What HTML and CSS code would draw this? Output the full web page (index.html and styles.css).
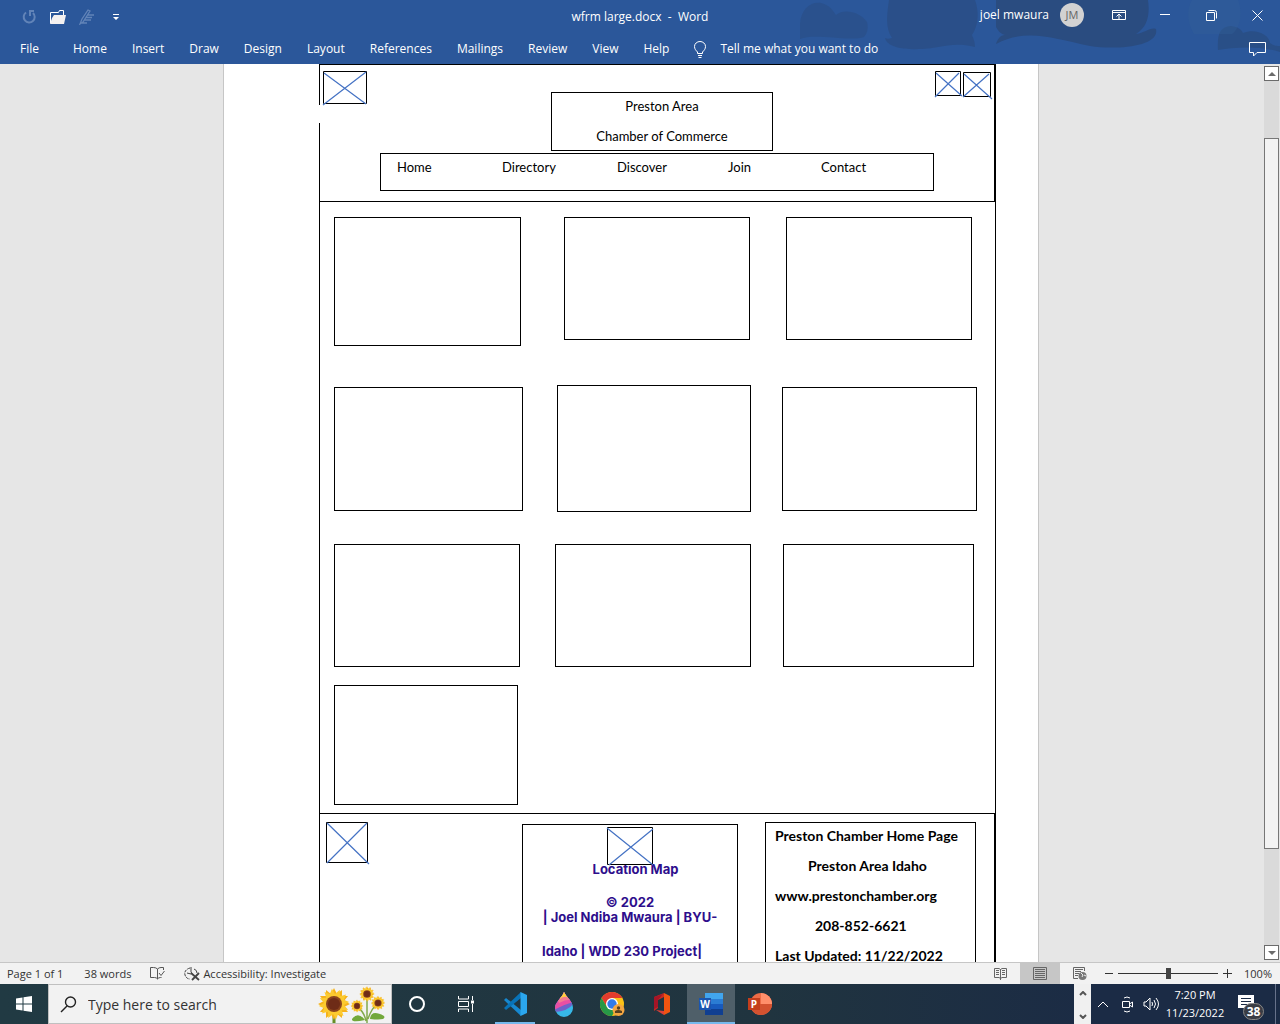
FILE: index.html
```html
<!DOCTYPE html>
<html lang="en">
<head>
<meta charset="utf-8">
<meta name="viewport" content="width=device-width, initial-scale=1">
<title>wfrm large.docx - Word</title>
<link rel="stylesheet" href="styles.css">
</head>
<body>
<header class="app-header">
  <svg class="clouds" width="520" height="64" viewBox="0 0 520 64" aria-hidden="true">
    <g fill="#2a4c80">
      <path opacity=".5" d="M40 39V24C41 8 52 1 61 3c9 2 12 8 15 12 8-7 24-3 31 7 2 8-1 13-3 15-14 5-49-4-64 2z"/>
      <path opacity=".65" d="M129 0c-2 14-4 28 3 38-3 1-5 1-7 0 3 14 39 12 53 9 11-2 22-4 37 0 0-6-2-9-3-12 7-10 7-24 3-35z"/>
      <path d="M236 0v27c3 5 5 7 9 8-5 0-8 5-9 9 30-16 56-6 94 2 25 4 70 1 66-17-6-2-11 4-20 5 12-7 14-20 12-34z"/>
      <path opacity=".75" d="M458 50c-1-16 2-23 13-24 7 1 10 3 12 7 12-5 26 1 27 10 4 3 7 3 10 3v6c-20-6-44-5-62-2z"/>
    </g>
    <path fill="#356099" opacity=".35" d="M432 0c-7 12-3 26 2 34h38c10-8 10-24 6-34z"/>
  </svg>
  <div class="title-bar">
    <div class="quick-access">
      <button class="icon-button faded" aria-label="Repeat"><svg width="16" height="16" viewBox="0 0 16 16" fill="none" stroke="currentColor" stroke-width="2"><path d="M5 3.500A5.500 5.500 0 1 0 12 4M13 2H9V7"/></svg></button>
      <button class="icon-button" aria-label="Open"><svg width="18" height="16" viewBox="0 0 18 16"><path d="M1.500 14V3.500h8l1-2h4v5" fill="none" stroke="#fff"/><path d="M5 6h12l-2 9H1l2-6z" fill="#f3f0f0"/></svg></button>
      <button class="icon-button faded" aria-label="Ink editor"><svg width="16" height="16" viewBox="0 0 16 16" fill="none" stroke="currentColor" stroke-width="1.300"><path d="M1 15l3-2 7-11-2-1-6 9zM8 6h7M7 8.500h6M5 11h7M3 14h5"/></svg></button>
      <button class="icon-button" aria-label="Customize Quick Access Toolbar"><svg width="8" height="8" viewBox="0 0 8 8" fill="#fff"><path d="M1 1h6v1H1zM1 4h6L4 7z"/></svg></button>
    </div>
    <h1 class="document-title">wfrm large.docx &nbsp;-&nbsp; Word</h1>
    <div class="account">
      <span class="user-name">joel mwaura</span>
      <span class="avatar">JM</span>
      <div class="window-buttons">
        <button aria-label="Ribbon display options"><svg width="14" height="12" viewBox="0 0 14 12" fill="none" stroke="#fff"><path d="M.5 1.500h13v9H.5zM.5 3.500h13M7 10V5M4.500 7.500L7 5l2.500 2.500"/></svg></button>
        <button aria-label="Minimize"><svg width="10" height="10" viewBox="0 0 10 10" stroke="#fff"><path d="M0 4.500h10"/></svg></button>
        <button aria-label="Restore"><svg width="11" height="11" viewBox="0 0 11 11" fill="none" stroke="#fff"><path d="M.5 2.500h8v8h-8zM2.500.5h6q2 0 2 2v6"/></svg></button>
        <button aria-label="Close"><svg width="11" height="11" viewBox="0 0 11 11" stroke="#fff"><path d="M.5.5l10 10M10.500.5l-10 10"/></svg></button>
      </div>
    </div>
  </div>
  <nav class="ribbon" aria-label="Ribbon tabs">
    <button class="tab file-tab">File</button>
    <button class="tab">Home</button>
    <button class="tab">Insert</button>
    <button class="tab">Draw</button>
    <button class="tab">Design</button>
    <button class="tab">Layout</button>
    <button class="tab">References</button>
    <button class="tab">Mailings</button>
    <button class="tab">Review</button>
    <button class="tab">View</button>
    <button class="tab">Help</button>
    <button class="tab tell-me"><svg width="12" height="17" viewBox="0 0 12 17" fill="none" stroke="#fff"><path d="M3.500 12.500V11C2 9.500.5 8 .5 5.500a5.500 5 0 0 1 11 0C11.500 8 10 9.500 8.500 11v1.500zM4 14.500h4M4.500 16.500h3"/></svg>Tell me what you want to do</button>
    <button class="tab comments" aria-label="Comments"><svg width="17" height="16" viewBox="0 0 17 16" fill="none" stroke="#fff"><path d="M.5 1.500h16v10H8L4.500 15v-3.500h-4z"/></svg></button>
  </nav>
</header>

<div class="workspace">
  <main class="page">
    <div class="wireframe">
      <header class="wire-header">
        <div class="wire-top">
          <svg class="picture logo" viewBox="0 0 44 33" role="img" aria-label="Picture placeholder"><path class="frame" d="M.5.5h43v32H.5z"/><path class="cross" d="M1 2l42 31M43 1L0 34"/></svg>
          <div class="wire-title"><p>Preston Area</p><p>Chamber of Commerce</p></div>
          <div class="social">
            <svg class="picture small" viewBox="0 0 26 26" role="img" aria-label="Picture placeholder"><path class="frame" d="M.5.5h25v24H.5z"/><path class="cross" d="M1 2l26 23M24 2L0 26"/></svg>
            <svg class="picture medium" viewBox="0 0 28 26" role="img" aria-label="Picture placeholder"><path class="frame" d="M.5 1.500h27v24H.5z"/><path class="cross" d="M1 3l28 25M26 3L0 26"/></svg>
          </div>
        </div>
        <nav class="wire-nav" aria-label="Site">
          <a href="#">Home</a><a href="#">Directory</a><a href="#">Discover</a><a href="#">Join</a><a href="#">Contact</a>
        </nav>
      </header>
      <section class="wire-main">
        <div class="card-row first"><div class="card"></div><div class="card"></div><div class="card"></div></div>
        <div class="card-row second"><div class="card"></div><div class="card"></div><div class="card"></div></div>
        <div class="card-row third"><div class="card"></div><div class="card"></div><div class="card"></div></div>
        <div class="card-row fourth"><div class="card"></div></div>
      </section>
      <footer class="wire-footer">
        <svg class="picture badge" viewBox="0 0 42 41" role="img" aria-label="Picture placeholder"><path class="frame" d="M.5.5h41v40H.5z"/><path class="cross" d="M1 1l42 41M41 1L1 41"/></svg>
        <div class="wire-box location">
          <svg class="picture map" viewBox="0 0 46 38" role="img" aria-label="Picture placeholder"><path class="frame" d="M.5.5h45v37H.5z"/><path class="cross" d="M0 1l46 37M46 2L2 38"/></svg>
          <p class="map-title">Location Map</p>
          <p class="copyright">© 2022<br>| Joel Ndiba Mwaura | BYU-</p>
          <p class="project">Idaho | WDD 230 Project|</p>
        </div>
        <div class="wire-box info">
          <p>Preston Chamber Home Page</p>
          <p class="area">Preston Area Idaho</p>
          <p>www.prestonchamber.org</p>
          <p class="phone">208-852-6621</p>
          <p>Last Updated: 11/22/2022</p>
        </div>
      </footer>
    </div>
  </main>
  <div class="scrollbar">
    <button class="scroll-arrow" aria-label="Scroll up"><svg width="8" height="4" viewBox="0 0 8 4"><path d="M0 4l4-4 4 4z" fill="#6b6b6b"/></svg></button>
    <div class="scroll-track"><div class="scroll-thumb"></div></div>
    <button class="scroll-arrow" aria-label="Scroll down"><svg width="8" height="4" viewBox="0 0 8 4"><path d="M0 0l4 4 4-4z" fill="#6b6b6b"/></svg></button>
  </div>
</div>

<div class="status-bar">
  <button class="page-count">Page 1 of 1</button>
  <button class="word-count">38 words</button>
  <button class="proofing" aria-label="Proofing"><svg width="15" height="13" viewBox="0 0 15 13" fill="none" stroke="#555"><path d="M7.500 12V2Q6 .5 3.500.5h-3v10h4q2 0 3 1.500 1-1.500 3-1.500h1M7.500 2Q9 .5 11 .5h2.500V3"/><path d="M9 6l2 2.500L14.500 4"/></svg></button>
  <button class="accessibility"><svg width="17" height="16" viewBox="0 0 17 16" fill="none" stroke="#444"><path d="M6 2C2 3 0 6 1 9s3 4 5 4" stroke-dasharray="3 1"/><path d="M7 1v5l2 3M3 7l4 1M10 3q3 1 3 4" /><path d="M7 7l8 7M15 7l-7 7" stroke-width="1.800"/></svg>Accessibility: Investigate</button>
  <div class="view-tools">
    <button class="view" aria-label="Read mode"><svg width="13" height="13" viewBox="0 0 13 13" fill="none" stroke="#666"><path d="M.5 1.500h4.500l1.500 1L8 1.500h4.500v9H8l-1.500 1-1.500-1H.5zM6.500 2v11M2 3.500h3M2 5.500h3M2 7.500h3M8 3.500h3M8 5.500h3M8 7.500h3"/></svg></button>
    <button class="view current" aria-label="Print layout"><svg width="14" height="13" viewBox="0 0 14 13" fill="none" stroke="#666"><path d="M.5.5h13v12H.5zM2 2.500h10M2 4.500h10M2 6.500h10M2 8.500h10M2 10.500h10"/></svg></button>
    <button class="view" aria-label="Web layout"><svg width="14" height="14" viewBox="0 0 14 14" fill="none" stroke="#666"><path d="M5 11.500H.5V.5h11V4M2 2.500h8M2 4.500h6M2 6.500h4M2 8.500h3"/><circle cx="9.500" cy="9" r="4" fill="#777" stroke="none"/><path d="M8 6l2 2-1 2M11 8l2 1" stroke="#eee"/></svg></button>
    <button class="zoom-step" aria-label="Zoom out"><svg width="8" height="9" viewBox="0 0 8 9" stroke="#333"><path d="M0 4.500h8"/></svg></button>
    <input class="zoom" type="range" min="10" max="190" value="100" aria-label="Zoom">
    <button class="zoom-step" aria-label="Zoom in"><svg width="9" height="9" viewBox="0 0 9 9" stroke="#333"><path d="M0 4.500h9M4.500 0v9"/></svg></button>
    <button class="zoom-level">100%</button>
  </div>
</div>

<footer class="taskbar">
  <button class="start" aria-label="Start"><svg width="16" height="16" viewBox="0 0 16 16" fill="#fff"><path d="M0 2.500L6.500 1.500v6H0zM7.500 1.300L16 0v7.500H7.500zM0 8.500h6.500v6L0 13.500zM7.500 8.500H16V16L7.500 14.700z"/></svg></button>
  <label class="search">
    <svg width="17" height="17" viewBox="0 0 17 17" fill="none" stroke="#222" stroke-width="1.400"><circle cx="10.500" cy="6" r="5"/><path d="M7 10L1 16"/></svg>
    <input type="text" placeholder="Type here to search" aria-label="Type here to search">
    <svg width="72" height="38" viewBox="0 0 72 38" aria-hidden="true">
      <defs>
        <g id="flower">
          <circle r="11" fill="#f0a81c"/>
          <path id="petals" fill="#f6b21b" d="M0-16L3-10 8-14 8-8 14-8 10-3 16 0 10 3 14 8 8 8 8 14 3 10 0 16-3 10-8 14-8 8-14 8-10 3-16 0-10-3-14-8-8-8-8-14-3-10z"/>
          <path fill="#fcca2f" transform="rotate(22) scale(.95)" d="M0-16L3-10 8-14 8-8 14-8 10-3 16 0 10 3 14 8 8 8 8 14 3 10 0 16-3 10-8 14-8 8-14 8-10 3-16 0-10-3-14-8-8-8-8-14-3-10z"/>
          <circle r="8" fill="#8a431c"/><circle r="6" fill="#6e2c17"/>
        </g>
      </defs>
      <path d="M17 28v10" stroke="#678f25" stroke-width="3"/>
      <g stroke="#83a94d" fill="none" stroke-width="1.500"><path d="M50 10v28M39 21q8 5 10 15M61 18q-7 6-10 16"/></g>
      <path d="M48 35q-7-9-13-1-1 4 13 1zM53 34q1-10 14-3 3 5-14 3z" fill="#72a83a"/>
      <use href="#flower" transform="translate(17 19)"/>
      <use href="#flower" transform="translate(50 9) scale(.48)"/>
      <use href="#flower" transform="translate(40 21) scale(.4)"/>
      <use href="#flower" transform="translate(61 18) scale(.45)"/>
    </svg>
  </label>
  <div class="apps">
    <button class="app" aria-label="Cortana"><svg width="18" height="18" viewBox="0 0 18 18" fill="none" stroke="#fff" stroke-width="2"><circle cx="9" cy="9" r="7"/></svg></button>
    <button class="app" aria-label="Task View"><svg width="18" height="18" viewBox="0 0 18 18" fill="none" stroke="#fff"><path d="M1.500 1v3h10V1M1.500 17v-3h10v3M1.500 6.500h10v5h-10zM15.500 1v4M15.500 9v8"/><path d="M14 5.500h3v3h-3z" fill="#fff" stroke="none"/></svg></button>
    <button class="app running" aria-label="Visual Studio Code"><svg width="24" height="24" viewBox="0 0 24 24"><path d="M1 8l2-2 15 12v6z" fill="#1688d0"/><path d="M1 16l2 2L18 6V0z" fill="#0873b8"/><path d="M17.500 0L24 3v18l-6.500 3z" fill="#2ba7ef"/></svg></button>
    <button class="app" aria-label="Paint app"><svg width="20" height="25" viewBox="0 0 20 25"><defs><clipPath id="drop"><path d="M10 0c2 5 9 9 9 16a9 9 0 0 1-18 0C1 10 8 6 10 0z"/></clipPath></defs><g clip-path="url(#drop)"><path d="M0 0h20v25H0z" fill="#37b8e8"/><path d="M0 0h20v11Q14 20 0 20z" fill="#7161c9"/><path d="M0 0h20v10Q11 12 0 18z" fill="#e94fa3"/><path d="M0 0h20v8Q12 7 5 11z" fill="#f27b91"/><path d="M5 0h10v6Q10 3 6 7z" fill="#ffd23b"/></g></svg></button>
    <button class="app" aria-label="Google Chrome"><svg width="26" height="24" viewBox="0 0 26 24"><circle cx="12" cy="12" r="12" fill="#fbc116"/><path d="M1.600 6A12 12 0 0 1 22.400 6H12l-5 9z" fill="#e33b2e"/><path d="M1.600 6A12 12 0 0 0 12 24l5-9-5 3-5-3z" fill="#279847"/><circle cx="12" cy="12" r="6" fill="#fff"/><circle cx="12" cy="12" r="4.700" fill="#317bea"/><circle cx="18.500" cy="18" r="6" fill="#f4a641"/><circle cx="18.500" cy="16" r="1.700" fill="#58401f"/><path d="M15 21v-2q3-2 7 0v2z" fill="#58401f"/></svg></button>
    <button class="app" aria-label="Office"><svg width="20" height="24" viewBox="0 0 20 24"><path d="M12 1L2 5v14l4-3V8l6-3z" fill="#c82a20"/><path d="M2 5v12l4-2V8l5-6z" fill="#a51527"/><path d="M12 1l6 3v16l-6 3z" fill="#f05410"/><path d="M4 18l8 1v4z" fill="#df3f37"/></svg></button>
    <button class="app active" aria-label="Word"><svg width="24" height="22" viewBox="0 0 24 22"><path d="M6 0h18v6H6z" fill="#41a5ee"/><path d="M6 6h18v5H6z" fill="#2b7cd3"/><path d="M6 11h18v5H6z" fill="#185abd"/><path d="M6 16h18v6H6z" fill="#103f91"/><path d="M0 5h12v12H0z" fill="#1a55af"/><text x="6" y="15" class="app-letter">W</text></svg></button>
    <button class="app" aria-label="PowerPoint"><svg width="24" height="22" viewBox="0 0 24 22"><circle cx="13" cy="11" r="11" fill="#ed6c47"/><path d="M13 0a11 11 0 0 1 11 11H13z" fill="#ff8f6b"/><path d="M24 11a11 11 0 0 1-22 0z" fill="#d35230"/><path d="M0 5h12v12H0z" fill="#c43e1c"/><text x="6" y="15" class="app-letter">P</text></svg></button>
  </div>
  <div class="tray">
    <div class="tray-scroll"><svg width="8" height="5" viewBox="0 0 8 5"><path d="M1 4l3-3 3 3"/></svg><svg width="8" height="5" viewBox="0 0 8 5"><path d="M1 1l3 3 3-3"/></svg></div>
    <button class="tray-icon" aria-label="Show hidden icons"><svg width="12" height="8" viewBox="0 0 12 8"><path d="M1 7l5-5 5 5"/></svg></button>
    <button class="tray-icon" aria-label="Meet Now"><svg width="13" height="17" viewBox="0 0 13 17"><path d="M1.500 5.500h7v6h-7zM8.500 8l3-2v5l-3-2M3 2q3-2 6 0M3 15q3 2 6 0"/></svg></button>
    <button class="tray-icon" aria-label="Volume"><svg width="17" height="16" viewBox="0 0 17 16"><path d="M1 6h2l4-4v12l-4-4H1zM9 6q1 2 0 4M11 4q3 4 0 8M13 2q5 6 0 12"/></svg></button>
    <button class="clock"><span>7:20 PM</span><span>11/23/2022</span></button>
    <button class="notifications" aria-label="38 notifications"><svg width="16" height="16" viewBox="0 0 16 16"><path d="M0 0h16v13h-7l-3 3v-3H0z" fill="#fff" stroke="none"/><path d="M3 3.500h10M3 6.500h10M3 9.500h6" stroke="#1b2b45"/></svg><span class="count">38</span></button>
    <span class="show-desktop"></span>
  </div>
</footer>
</body>
</html>
```

FILE: styles.css
```css
* { box-sizing: border-box; }
body {
  margin: 0;
  height: 100vh;
  display: flex;
  flex-direction: column;
  overflow: hidden;
  background: #e6e6e6;
  font-family: "Open Sans", "Noto Sans", sans-serif;
  font-size: 12px;
  color: #000;
}
p, h1 { margin: 0; font-size: inherit; font-weight: inherit; }
button {
  border: 0;
  padding: 0;
  background: none;
  color: inherit;
  font: inherit;
  white-space: nowrap;
}
svg { display: block; flex: none; }

/* Title bar and ribbon */
.app-header {
  position: relative;
  flex: none;
  background: #2b579a;
  color: #fff;
}
.clouds { position: absolute; top: 0; right: 0; }
.title-bar {
  position: relative;
  height: 32px;
  display: grid;
  grid-template-columns: 1fr auto 1fr;
}
.quick-access { display: flex; align-items: center; padding-left: 20px; gap: 11px; }
.icon-button { width: 18px; display: flex; justify-content: center; }
.faded { color: #6284b8; }
.document-title { line-height: 34px; }
.account { display: flex; justify-content: flex-end; line-height: 30px; height: 30px; }
.avatar {
  width: 24px;
  height: 24px;
  margin: 3px 12px 0 11px;
  border-radius: 50%;
  background: #d2d2d2;
  color: #666;
  font-size: 11px;
  line-height: 24px;
  text-align: center;
}
.window-buttons { display: flex; }
.window-buttons button { width: 46px; display: flex; align-items: center; justify-content: center; }
.ribbon {
  position: relative;
  display: flex;
  align-items: center;
  height: 32px;
  padding: 2px 14px 0 20px;
  gap: 25px;
}
.tab { line-height: 20px; }
.file-tab { margin-right: 9px; }
.tell-me { display: flex; align-items: center; gap: 14px; }
.comments { margin-left: auto; }

/* Document area */
.workspace { flex: 1; min-height: 0; display: flex; overflow: hidden; }
.page {
  width: 816px;
  margin: 0 auto;
  padding: 0 42px 0 95px;
  background: #fff;
  border: solid #c6c6c6;
  border-width: 0 1px;
  font-family: Lato, "Liberation Sans", sans-serif;
  font-size: 13px;
  line-height: 20px;
}
.wireframe { position: relative; width: 677px; border: solid #000; border-width: 1px 1px 0; }
.wireframe::before {
  content: "";
  position: absolute;
  left: -1px;
  top: 40px;
  width: 1px;
  height: 18px;
  background: #fff;
}
.picture { overflow: visible; }
.frame { fill: #fff; stroke: #000; }
.cross { fill: none; stroke: #4472c4; stroke-width: 1.2; }
.logo { width: 44px; height: 33px; }
.small { width: 26px; height: 26px; }
.medium { width: 28px; height: 26px; }
.badge { width: 42px; height: 41px; }
.map { position: relative; width: 46px; height: 38px; margin: 2px auto 0; }

.wire-header { height: 137px; padding: 6px 3px 0; border: solid #000; border-width: 0 1px 1px 0; }
.wire-top { display: grid; grid-template-columns: 228px 222px 1fr; }
.wire-title {
  height: 59px;
  margin-top: 21px;
  padding-top: 3px;
  border: 1px solid #000;
  text-align: center;
}
.wire-title p + p { margin-top: 10px; }
.social { display: flex; justify-content: flex-end; gap: 2px; }
.wire-nav {
  display: grid;
  grid-template-columns: 105px 115px 111px 93px auto;
  width: 554px;
  height: 38px;
  margin: 2px 0 0 57px;
  padding: 3px 0 0 16px;
  border: 1px solid #000;
}
.wire-nav a { color: #000; text-decoration: none; }

.wire-main { padding: 15px 14px 8px; }
.card-row { display: grid; }
.card { border: 1px solid #000; height: 123px; }
.first { grid-template-columns: 230px 222px 186px; height: 168px; }
.first .card { width: 186px; }
.first .card:first-child { width: 187px; height: 129px; }
.second { grid-template-columns: 223px 225px 195px; align-items: center; margin-bottom: 32px; }
.second .card { height: 124px; }
.second .card:first-child { width: 189px; }
.second .card:nth-child(2) { width: 194px; height: 127px; }
.third { grid-template-columns: 221px 228px 191px; height: 141px; }
.third .card { width: 191px; }
.third .card:first-child { width: 186px; }
.third .card:nth-child(2) { width: 196px; }
.fourth { grid-template-columns: 184px; }
.fourth .card { height: 120px; }

.wire-footer {
  display: grid;
  grid-template-columns: 196px 243px 211px;
  align-items: start;
  padding: 8px 0 0 6px;
  border: solid #000;
  border-width: 1px 1px 0 0;
  font-weight: bold;
}
.wire-box { height: 180px; border: 1px solid #000; }
.location {
  width: 216px;
  margin-top: 2px;
  font-family: Inter, "Liberation Sans", sans-serif;
  font-size: 13px;
  line-height: 15px;
  color: #2e0e8c;
  text-align: center;
}
.map-title { margin-top: -3px; padding-left: 11px; }
.copyright { margin-top: 18px; }
.project { margin-top: 19px; padding-left: 19px; text-align: left; }
.info { padding: 3px 0 0 9px; font-size: 14px; }
.info p + p { margin-top: 10px; }
.info .area { padding-left: 33px; }
.info .phone { padding-left: 40px; }

/* Vertical scrollbar */
.scrollbar { width: 18px; display: flex; flex-direction: column; padding: 2px 1px 2px 2px; }
.scroll-arrow {
  height: 15px;
  display: flex;
  align-items: center;
  justify-content: center;
  background: #fff;
  border: 1px solid #6b6b6b;
}
.scroll-track { flex: 1; padding: 57px 0 96px; background: #dadada; }
.scroll-thumb { height: 100%; background: #f3f3f3; border: 1px solid #777; }

/* Status bar */
.status-bar {
  flex: none;
  display: flex;
  align-items: center;
  height: 22px;
  padding-left: 7px;
  background: #f2f2f2;
  border-top: 1px solid #c6c6c6;
  color: #333;
  font-size: 11px;
}
.word-count { margin-left: 21px; }
.proofing { margin-left: 19px; }
.accessibility { display: flex; align-items: center; gap: 2px; margin-left: 19px; }
.view-tools { display: flex; align-items: center; height: 100%; margin-left: auto; padding-right: 8px; }
.view { width: 40px; height: 100%; display: flex; align-items: center; justify-content: center; }
.current { background: #c6c6c6; }
.zoom-step { margin: 0 5px; }
.zoom { appearance: none; width: 100px; height: 16px; margin: 0; background: linear-gradient(#333, #333) center / 100% 1px no-repeat; }
.zoom::-webkit-slider-thumb { appearance: none; width: 5px; height: 11px; background: #444; }
.zoom-level { width: 31px; margin-left: 4px; text-align: right; }

/* Taskbar */
.taskbar {
  flex: none;
  display: flex;
  height: 40px;
  background: linear-gradient(90deg, #213a43, #20343f 60%, #1b2b45 86%);
  color: #fff;
}
.start { width: 48px; display: flex; align-items: center; justify-content: center; }
.search {
  display: flex;
  align-items: center;
  width: 344px;
  padding: 0 2px 0 11px;
  background: #f2f2f2;
  border: 1px solid #c0c0c0;
}
.search input {
  flex: 1;
  min-width: 0;
  border: 0;
  padding: 0 0 0 11px;
  background: none;
  font: 14px "Open Sans", "Noto Sans", sans-serif;
}
.search input::placeholder { color: #333; opacity: 1; }
.apps { display: flex; gap: 1px; padding-left: 1px; }
.app {
  width: 48px;
  display: flex;
  align-items: center;
  justify-content: center;
}
.running { background: linear-gradient(#76b9ed, #76b9ed) bottom / 40px 2px no-repeat; }
.active { background: #4f5f69; box-shadow: inset 0 -2px #76b9ed; }
.app-letter { fill: #fff; font-weight: bold; font-size: 10px; text-anchor: middle; }
.tray { display: flex; margin-left: auto; align-items: stretch; }
.tray svg { fill: none; stroke: #fff; }
.tray-scroll {
  width: 17px;
  display: flex;
  flex-direction: column;
  align-items: center;
  justify-content: space-between;
  padding: 7px 0 5px;
  background: #f0f0f0;
}
.tray .tray-scroll svg { stroke: #555; stroke-width: 2px; }
.tray-icon { width: 24px; display: flex; align-items: center; justify-content: center; }
.clock { width: 64px; display: flex; flex-direction: column; justify-content: center; align-items: center; line-height: 18px; font-size: 11px; }
.notifications { position: relative; width: 48px; padding: 0 0 2px 11px; display: flex; align-items: center; }
.count {
  position: absolute;
  left: 16px;
  top: 19px;
  width: 21px;
  border-radius: 9px;
  border: 1px solid #888;
  background: #3a3d45;
  line-height: 15px;
  font-weight: bold;
}
.show-desktop { width: 5px; border-left: 1px solid #67728a; }
```
